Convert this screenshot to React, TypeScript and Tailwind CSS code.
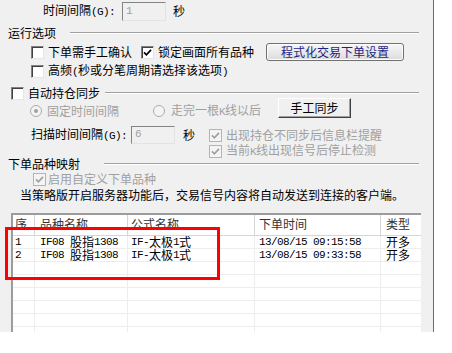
import React from 'react';

type Row = { n: string; sym: string; f: string; t: string; ty: string };

const rows: Row[] = [
  { n: '1', sym: 'IF08 股指1308', f: 'IF-太极1式', t: '13/08/15 09:15:58', ty: '开多' },
  { n: '2', sym: 'IF08 股指1308', f: 'IF-太极1式', t: '13/08/15 09:33:58', ty: '开多' },
  { n: '', sym: '', f: '', t: '', ty: '' },
  { n: '', sym: '', f: '', t: '', ty: '' },
  { n: '', sym: '', f: '', t: '', ty: '' },
  { n: '', sym: '', f: '', t: '', ty: '' },
  { n: '', sym: '', f: '', t: '', ty: '' },
  { n: '', sym: '', f: '', t: '', ty: '' },
];

// half-width latin like SimSun: 6px per char
const Mixed: React.FC<{ text: string }> = ({ text }) => {
  const parts = text.split(/([\x20-\x7e]+)/).filter(Boolean);
  return (
    <>
      {parts.map((p, i) =>
        /^[\x20-\x7e]+$/.test(p) ? (
          <span key={i} className="font-['Liberation_Mono',monospace] text-[11px] tracking-[-0.6px] whitespace-pre">
            {p}
          </span>
        ) : (
          <span key={i}>{p}</span>
        )
      )}
    </>
  );
};

const Check: React.FC<{ checked?: boolean; disabled?: boolean }> = ({ checked, disabled }) => (
  <span
    className={
      disabled
        ? 'w-[13px] h-[13px] shrink-0 border border-[#b4b4b4] bg-[#f4f4f4] flex items-center justify-center'
        : 'w-[13px] h-[13px] shrink-0 border border-t-[#808080] border-l-[#808080] border-r-[#e6e6e6] border-b-[#e6e6e6] shadow-[inset_1px_1px_0_#404040] bg-white flex items-center justify-center'
    }
  >
    {checked && (
      <svg width="9" height="9" viewBox="0 0 9 9">
        <path d="M1 4.3 L3.4 6.8 L8 1.8" fill="none" stroke={disabled ? '#a0a0a0' : '#000'} strokeWidth="1.7" />
      </svg>
    )}
  </span>
);

const Radio: React.FC<{ on?: boolean }> = ({ on }) => (
  <svg width="12" height="12" viewBox="0 0 12 12" className="shrink-0">
    <circle cx="6" cy="6" r="5.5" fill="#f4f4f4" stroke="#ababab" />
    {on && <circle cx="6" cy="6" r="2" fill="#a0a0a0" />}
  </svg>
);

const TextBox: React.FC<{ value: string; className: string }> = ({ value, className }) => (
  <span
    className={
      'flex items-center pl-[3px] bg-[#f0f0f0] border border-t-[#848484] border-l-[#848484] border-r-[#e3e3e3] border-b-[#e3e3e3] text-[#a0a0a0] ' +
      className
    }
  >
    <Mixed text={value} />
  </span>
);

const Line: React.FC<{ className?: string }> = ({ className = '' }) => (
  <div className={'flex-1 border-t border-t-[#a0a0a0] border-b border-b-white ' + className} />
);

export default function App() {
  return (
    <div className="w-[452px] h-[353px] bg-white overflow-hidden">
      <div className="w-[434px] h-[332px] bg-[#f0f0f0] border-r border-[#6d6d6d] overflow-hidden text-[12px] leading-none text-black font-['Noto_Sans_CJK_SC',sans-serif] whitespace-nowrap">
        {/* interval */}
        <div className="h-[22px] flex items-center pl-[43px]">
          <span className="w-[79px]">
            <Mixed text="时间间隔(G):" />
          </span>
          <TextBox value="1" className="w-[44px] h-[19px]" />
          <span className="ml-[7px]">秒</span>
        </div>

        {/* 运行选项 */}
        <div className="h-[22px] flex items-center pl-[8px] pr-[14px]">
          <span>运行选项</span>
          <Line className="ml-[14px]" />
        </div>
        <div className="h-[16px] flex items-center pl-[31px]">
          <Check />
          <span className="ml-[4px] w-[84px]">下单需手工确认</span>
          <span className="ml-[9px]">
            <Check checked />
          </span>
          <span className="ml-[4px] w-[96px]">锁定画面所有品种</span>
          <button className="ml-[12px] w-[138px] h-[18px] rounded-[3px] border border-[#707070] bg-gradient-to-b from-[#f7f7f7] to-[#dcdcdc] shadow-[inset_0_0_0_1px_#fcfcfc] text-[#1f1f86] flex items-center justify-center">
            程式化交易下单设置
          </button>
        </div>
        <div className="h-[22px] flex items-center pl-[31px]">
          <Check />
          <span className="ml-[4px]">
            <Mixed text="高频(秒或分笔周期请选择该选项)" />
          </span>
        </div>

        {/* 自动持仓同步 */}
        <div className="h-[22px] flex items-center pl-[11px] pr-[14px]">
          <Check />
          <span className="ml-[4px]">自动持仓同步</span>
          <Line className="ml-[5px]" />
        </div>
        <div className="h-[14px] flex items-center pl-[30px] text-[#a0a0a0]">
          <Radio on />
          <span className="ml-[5px] w-[106px]">固定时间间隔</span>
          <Radio />
          <span className="ml-[6px] w-[107px]">
            <Mixed text="走完一根K线以后" />
          </span>
          <button className="mb-[7px] w-[73px] h-[20px] bg-[#f0f0f0] border border-t-white border-l-white border-r-[#404040] border-b-[#404040] shadow-[inset_-1px_-1px_0_#a0a0a0] text-black flex items-center justify-center">
            手工同步
          </button>
        </div>
        <div className="flex pl-[31px]">
          <div className="h-[33px] flex items-center">
            <span className="w-[100px]">
              <Mixed text="扫描时间间隔(G):" />
            </span>
            <TextBox value="6" className="w-[44px] h-[18px]" />
            <span className="ml-[8px]">秒</span>
          </div>
          <div className="ml-[14px] pt-[9px] flex flex-col text-[#a0a0a0]">
            <div className="h-[16px] flex items-center">
              <Check checked disabled />
              <span className="ml-[4px]">出现持仓不同步后信息栏提醒</span>
            </div>
            <div className="h-[16px] flex items-center">
              <Check checked disabled />
              <span className="ml-[4px]">
                <Mixed text="当前K线出现信号后停止检测" />
              </span>
            </div>
          </div>
        </div>

        {/* 下单品种映射 */}
        <div className="h-[10px] flex items-center pl-[8px] pr-[14px]">
          <span className="w-[72px]">下单品种映射</span>
          <Line className="ml-[24px]" />
        </div>
        <div className="h-[20px] flex items-center pl-[33px] text-[#a0a0a0]">
          <Check checked disabled />
          <span className="ml-[2px]">启用自定义下单品种</span>
        </div>
        <div className="h-[12px] flex items-center pl-[20px]">
          当策略版开启服务器功能后，交易信号内容将自动发送到连接的客户端。
        </div>

        {/* list */}
        <div className="mt-[12px] ml-[11px] w-[410px] relative border-t-2 border-l-2 border-[#9c9c9c] bg-white">
          <div className="grid grid-cols-[22px_93px_127px_126px_1fr] h-[21px] border-b border-[#d5d5d5] text-[#333]">
            <div className="border-r border-[#d5d5d5] pl-[2px] pb-[2px] flex items-center">序</div>
            <div className="border-r border-[#d5d5d5] pl-[5px] pb-[2px] flex items-center">品种名称</div>
            <div className="border-r border-[#d5d5d5] pl-[3px] pb-[2px] flex items-center">公式名称</div>
            <div className="border-r border-[#d5d5d5] pl-[4px] pb-[2px] flex items-center">下单时间</div>
            <div className="pl-[5px] pb-[2px] flex items-center">类型</div>
          </div>
          {rows.map((r, i) => (
            <div key={i} className="grid grid-cols-[22px_93px_127px_126px_1fr] h-[13px] border-b border-[#ededed]">
              <div className="border-r border-[#ededed] pl-[2px] flex items-center">
                <Mixed text={r.n} />
              </div>
              <div className="border-r border-[#ededed] pl-[5px] flex items-center">
                <Mixed text={r.sym} />
              </div>
              <div className="border-r border-[#ededed] pl-[3px] flex items-center">
                <Mixed text={r.f} />
              </div>
              <div className="border-r border-[#ededed] pl-[4px] flex items-center">
                <Mixed text={r.t} />
              </div>
              <div className="pl-[5px] flex items-center">{r.ty}</div>
            </div>
          ))}
          <div className="absolute left-[-8px] top-[12px] w-[215px] h-[53px] border-[3px] border-[#ff0000] pointer-events-none" />
        </div>
      </div>
    </div>
  );
}
